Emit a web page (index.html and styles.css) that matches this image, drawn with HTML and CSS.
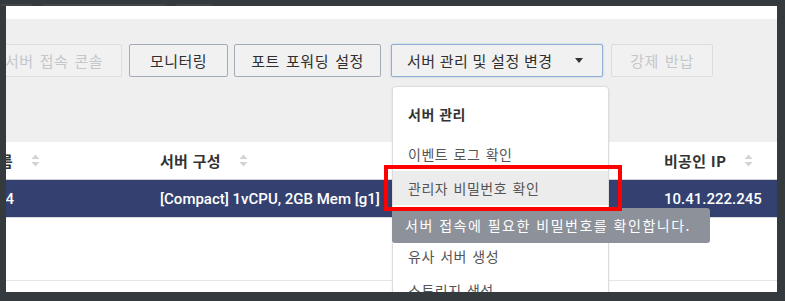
FILE: index.html
```html
<!DOCTYPE html>
<html lang="ko">
<head>
<meta charset="utf-8">
<title>서버 관리</title>
<link rel="stylesheet" href="styles.css">
</head>
<body>
<div class="screen">
  <div class="tabs"><span class="tab t1"></span><span class="tab t2"></span><span class="tab t3"></span></div>
  <div class="page">
    <div class="strip"></div>
    <div class="toolbar">
      <button class="btn disabled b1">서버 접속 콘솔</button>
      <button class="btn b2">모니터링</button>
      <button class="btn b3">포트 포워딩 설정</button>
      <button class="btn dd b4"><span>서버 관리 및 설정 변경</span><span class="caret"></span></button>
      <button class="btn disabled b5">강제 반납</button>
    </div>
    <div class="table">
      <div class="row head">
        <div class="cell c1"><span class="clip">서버 이름</span><svg class="sort" width="9" height="13" viewBox="0 0 9 13"><path d="M4.5 0.5L8.5 5H0.5Z M0.5 8H8.5L4.5 12.5Z" fill="#d3d3d3"/></svg></div>
        <div class="cell c2"><span>서버 구성</span><svg class="sort" width="9" height="13" viewBox="0 0 9 13"><path d="M4.5 0.5L8.5 5H0.5Z M0.5 8H8.5L4.5 12.5Z" fill="#d3d3d3"/></svg></div>
        <div class="cell c3"><span>비공인 IP</span><svg class="sort s3" width="9" height="13" viewBox="0 0 9 13"><path d="M4.5 0.5L8.5 5H0.5Z M0.5 8H8.5L4.5 12.5Z" fill="#d3d3d3"/></svg></div>
      </div>
      <div class="row sel">
        <div class="cell c1"><span class="clip clip-r">web-server-004</span></div>
        <div class="cell c2">[Compact] 1vCPU, 2GB Mem [g1]</div>
        <div class="cell c3">10.41.222.245</div>
      </div>
      <div class="row empty"></div>
    </div>

    <div class="menu">
      <div class="menu-head">서버 관리</div>
      <div class="item">이벤트 로그 확인</div>
      <div class="item active">관리자 비밀번호 확인</div>
      <div class="item">서버 설정 변경</div>
      <div class="item">유사 서버 생성</div>
      <div class="item">스토리지 생성</div>
    </div>
    <div class="tip">서버 접속에 필요한 비밀번호를 확인합니다.</div>
    <div class="mark"></div>
  </div>
</div>
</body>
</html>
```
FILE: styles.css
```css
* { box-sizing: border-box; }
html, body { margin: 0; padding: 0; }
body {
  background: #353a3e;
  font-family: Roboto, "Noto Sans CJK KR", sans-serif;
  font-size: 14px;
  width: 785px;
  height: 301px;
  overflow: hidden;
}
.screen { padding: 0 8px 0 6px; }
.tabs {
  height: 6px;
  display: flex;
  align-items: flex-end;
  margin-left: -6px;
}
.tab { height: 2px; background: #41464a; border-radius: 2px 2px 0 0; }
.t1 { width: 32px; }
.t2 { width: 124px; margin-left: 10px; }
.t3 { width: 36px; margin-left: 10px; }

.page {
  position: relative;
  width: 771px;
  height: 286px;
  overflow: hidden;
  background: #fff;
}
.strip { height: 13px; background: #fff; }
.toolbar {
  height: 123px;
  background: #efefef;
  padding-top: 25px;
  display: flex;
  align-items: flex-start;
}
.btn {
  height: 33px;
  background: #f1f1f1;
  border: 1px solid #a3abb6;
  border-radius: 2px;
  font-family: "Noto Sans CJK KR", sans-serif;
  font-size: 15px;
  letter-spacing: 0.5px;
  word-spacing: 1.5px;
  color: #2f2f2f;
  padding: 0;
  display: flex;
  align-items: center;
  justify-content: center;
}
.btn.disabled { color: #c3c7cc; border-color: #d9dee4; }
.b1 { width: 136px; margin-left: -20px; }
.b2 { width: 99px; margin-left: 7px; }
.b3 { width: 147px; margin-left: 6px; }
.b4 {
  width: 212px; margin-left: 10px;
  justify-content: space-between;
  padding: 0 19px 0 15px;
  border-color: #8eaed3;
  box-shadow: 0 0 2px rgba(120, 160, 210, 0.6);
  word-spacing: -0.5px;
}
.b5 { width: 102px; margin-left: 8px; }
.caret {
  width: 0; height: 0;
  border-left: 4.5px solid transparent;
  border-right: 4.5px solid transparent;
  border-top: 5px solid #333;
}

.row { display: flex; align-items: center; }
.row.head {
  height: 38px;
  border-bottom: 1px solid #cfcfcf;
  font-family: "Noto Sans CJK KR", Roboto, sans-serif;
  font-size: 15px;
  font-weight: 700;
  color: #333;
  letter-spacing: 0.3px;
}
.row.sel {
  height: 38px;
  background: #344170;
  color: #fff;
  font-size: 15px;
  font-weight: 500;
  border-bottom: 1px solid #d8d8d8;
}
.row.empty { height: 63px; border-bottom: 1px solid #e6e6e6; }
.cell { display: flex; align-items: center; white-space: nowrap; }
.c1 { width: 154px; }
.c2 { width: 504px; }
.c3 { width: 113px; }
.clip { display: flex; justify-content: flex-end; width: 7px; white-space: nowrap; }
.clip-r { width: 8px; }
.sort { margin-left: 18px; flex: none; }
.s3 { margin-left: 18px; }

.menu {
  position: absolute;
  left: 386px;
  top: 80px;
  width: 217px;
  height: 240px;
  background: #fff;
  border: 1px solid #dcdcdc;
  border-radius: 4px;
  box-shadow: 0 1px 3px rgba(0, 0, 0, 0.08);
  padding-top: 10px;
  font-family: "Noto Sans CJK KR", sans-serif;
  letter-spacing: 0.5px;
}
.menu-head {
  height: 34px;
  line-height: 34px;
  padding-left: 15px;
  font-weight: 700;
  color: #333;
  margin-bottom: 6px;
}
.item {
  height: 34px;
  line-height: 34px;
  padding-left: 15px;
  color: #555;
  word-spacing: 1px;
}
.item.active { background: #ececec; }

.tip {
  position: absolute;
  left: 386px;
  top: 202px;
  width: 318px;
  height: 35px;
  line-height: 35px;
  padding-left: 13px;
  background: #8d919a;
  color: #fff;
  border-radius: 3px;
  font-family: "Noto Sans CJK KR", sans-serif;
  letter-spacing: 1.5px;
  word-spacing: 0;
}
.mark {
  position: absolute;
  left: 378px;
  top: 159px;
  width: 238px;
  height: 46px;
  border: 4px solid #f00;
}
```
